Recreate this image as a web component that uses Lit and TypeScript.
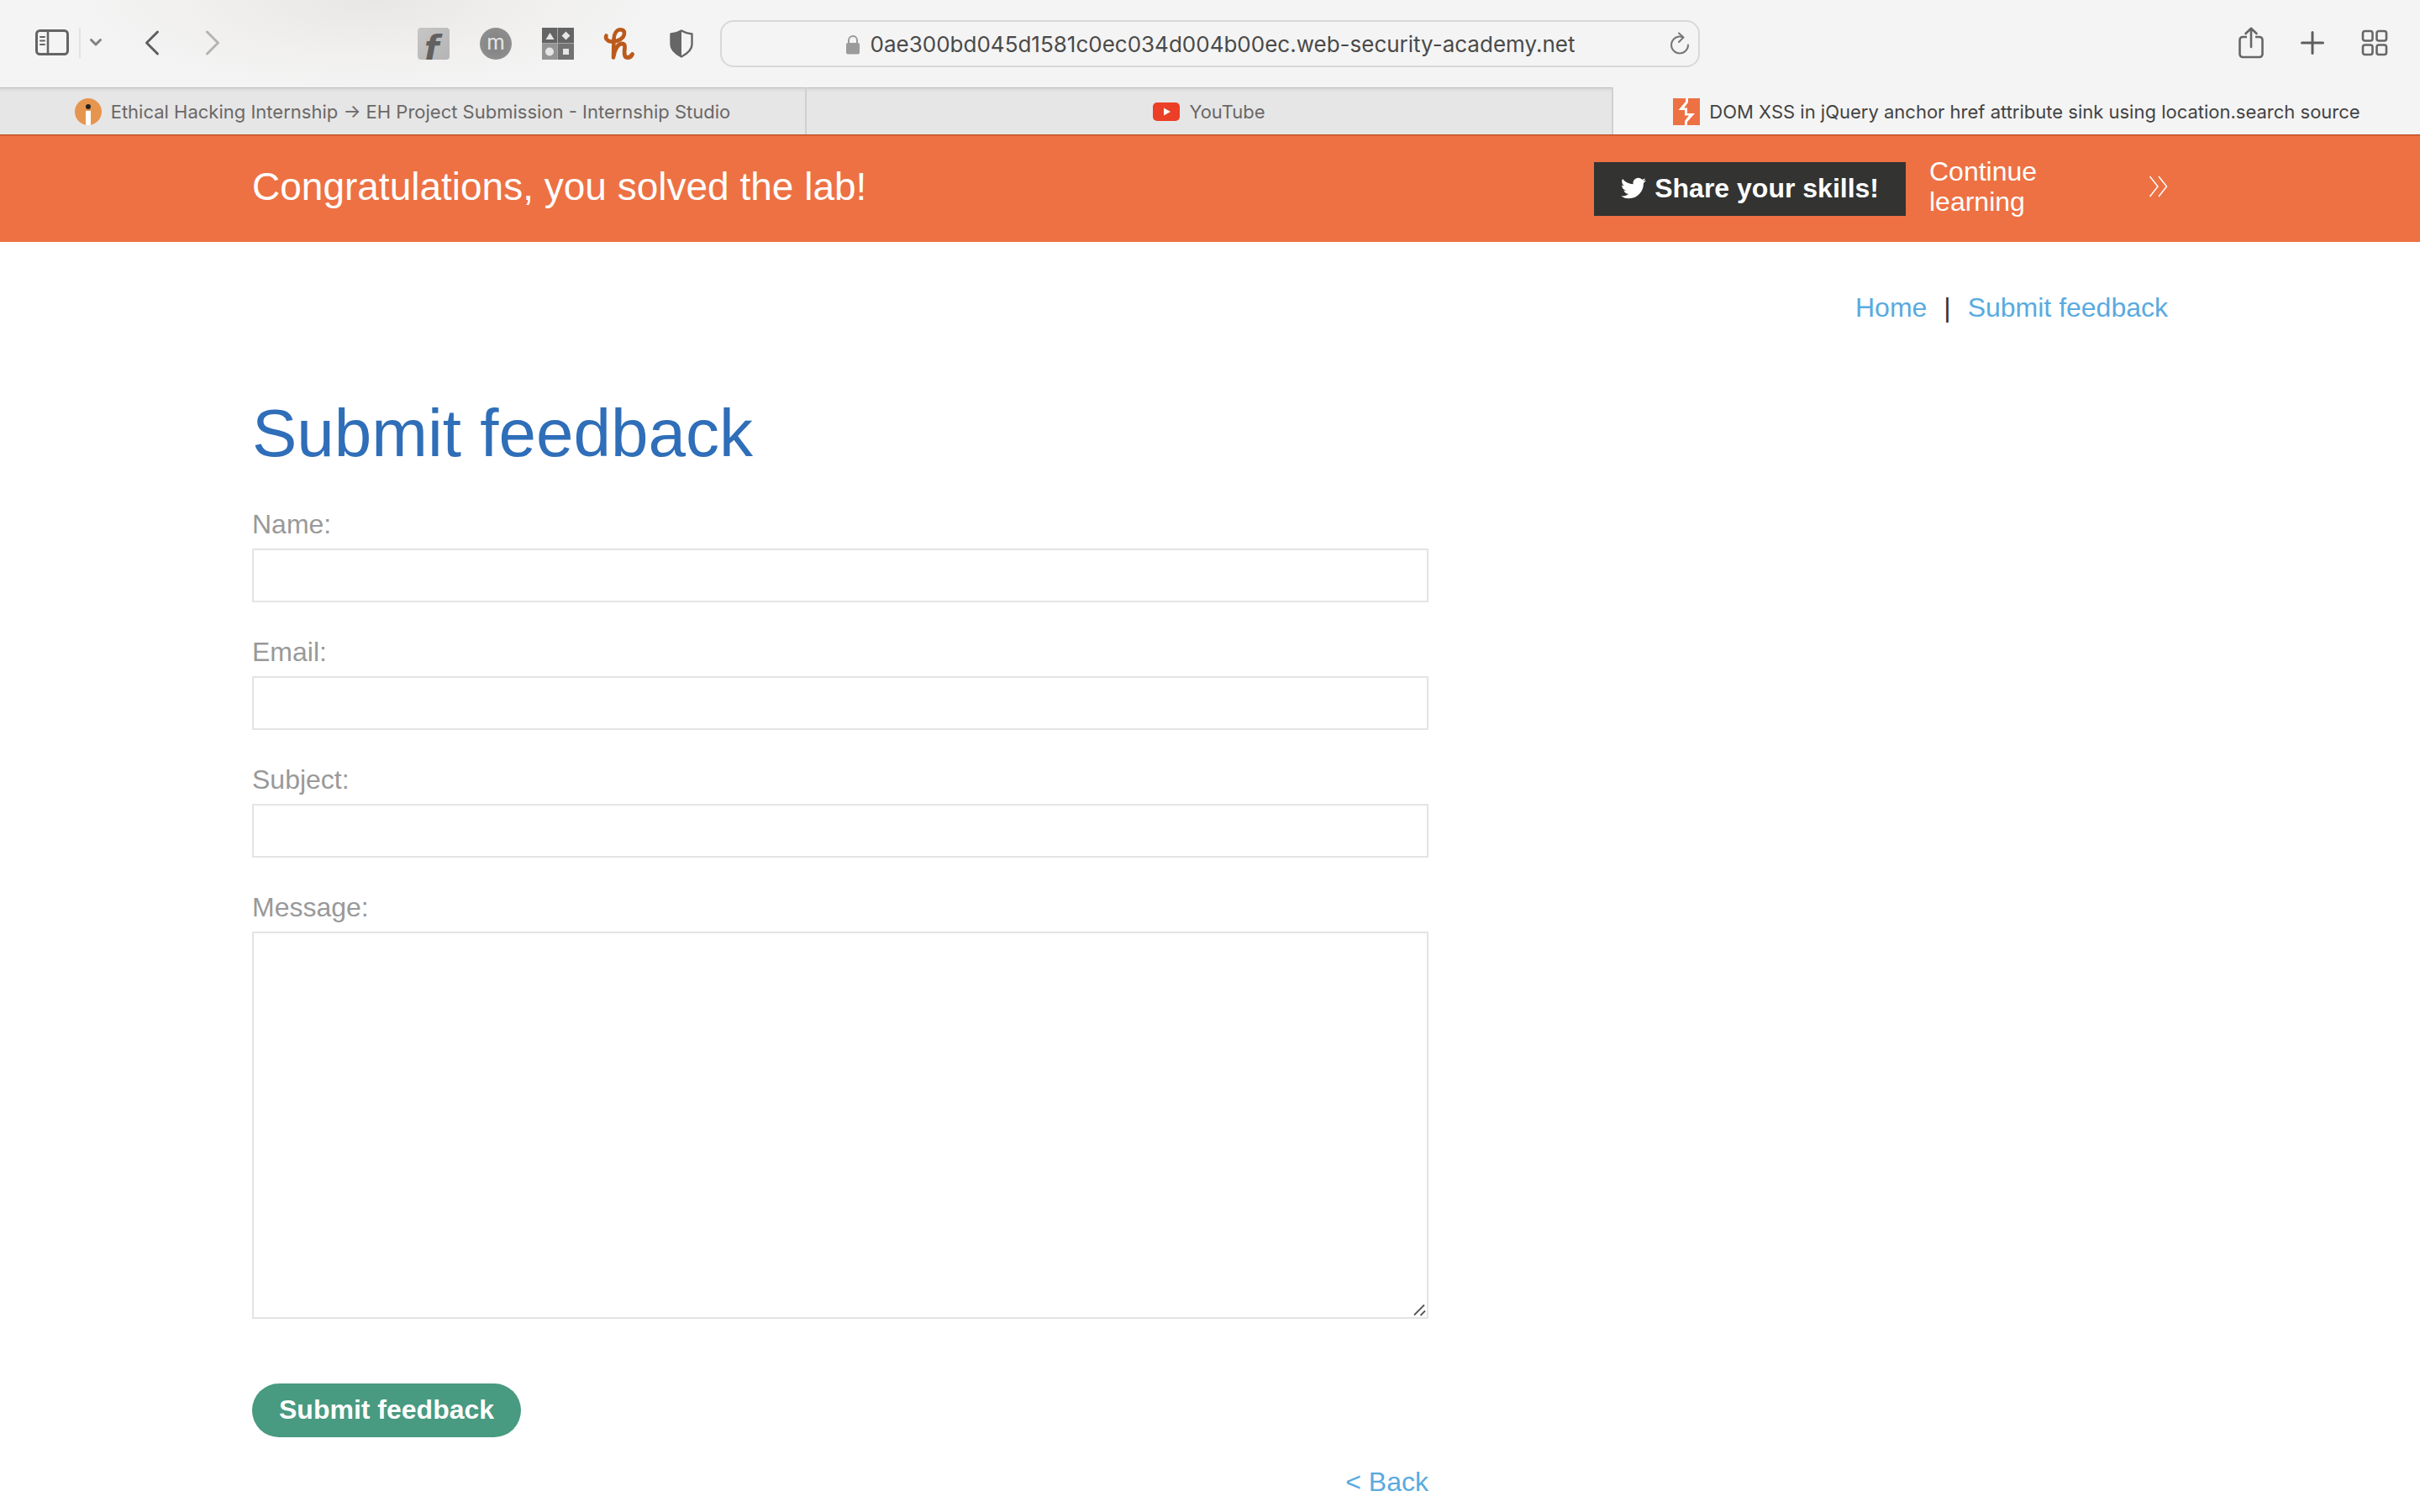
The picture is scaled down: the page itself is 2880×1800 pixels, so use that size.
import { LitElement, html, css, svg } from "lit";
import { customElement } from "lit/decorators.js";

const icon = (w: number, h: number, body: unknown) => html`<svg
  width=${w}
  height=${h}
  viewBox="0 0 ${w} ${h}"
  fill="none"
  aria-hidden="true"
>
  ${body}
</svg>`;

const icons = {
  sidebar: icon(40, 32, svg`
    <rect x="1.5" y="1.5" width="37" height="28" rx="4" stroke="#646464" stroke-width="3"/>
    <path d="M15 2v27" stroke="#646464" stroke-width="2.6"/>
    <path d="M6 9h5M6 13.5h5M6 18h5" stroke="#646464" stroke-width="2" stroke-linecap="round"/>`),
  chevronDown: icon(16, 12, svg`<path d="M2.5 2.5L8 8l5.500-5.500" stroke="#808086" stroke-width="3" stroke-linecap="round" stroke-linejoin="round"/>`),
  back: icon(18, 30, svg`<path d="M15.500 2L2.500 15l13 13" stroke="#5e5e5e" stroke-width="3" stroke-linecap="round" stroke-linejoin="round"/>`),
  forward: icon(18, 30, svg`<path d="M2.500 2l13 13-13 13" stroke="#b4b3b3" stroke-width="3" stroke-linecap="round" stroke-linejoin="round"/>`),
  fonts: icon(38, 38, svg`
    <defs>
      <linearGradient id="fg" x1="0" y1="0" x2="1" y2="1"><stop offset="0" stop-color="#c6c6c6"/><stop offset="1" stop-color="#b4b4b4"/></linearGradient>
    </defs>
    <rect width="38" height="38" rx="4" fill="url(#fg)"/>
    <text x="8" y="38" font-family="DejaVu Sans, sans-serif" font-weight="700" font-style="italic" font-size="40" fill="#626060">f</text>`),
  momentum: icon(38, 38, svg`
    <defs><radialGradient id="mg"><stop offset="0" stop-color="#808080"/><stop offset="1" stop-color="#8e8e8e"/></radialGradient></defs>
    <circle cx="19" cy="19" r="19" fill="url(#mg)"/>
    <text x="19" y="26" text-anchor="middle" font-family="Lato, sans-serif" font-size="26" fill="#e4e4e4">m</text>`),
  shapes: icon(38, 38, svg`
    <path d="M0 0h38v19H0z" fill="#646464"/>
    <path d="M0 19h19v19H0z" fill="#949494"/>
    <path d="M19 19h19v19H19z" fill="#727272"/>
    <path d="M18.500 0v38M0 18.500h38" stroke="#a8a8a8" stroke-width="1"/>
    <path d="M9.500 6l5 8h-10zM28.500 4.500l5 5-5 5-5-5zM25 25h7v7h-7z" fill="#e6e6e6"/>
    <circle cx="9" cy="28.500" r="5" fill="#e6e6e6"/>`),
  honey: icon(36, 38, svg`
    <path d="M2.500 9.500c-1.500 3 1 6.500 5.500 7 8 .5 16-4 16-10 0-3-2-4.300-4.500-4.300-5 0-7.500 5-8 11L11 35.500" stroke="#bb5a1c" stroke-width="4.600" stroke-linecap="round" stroke-linejoin="round"/>
    <path d="M11.500 33c1-7 5-14 9.500-14 3 0 4 2 3.500 5-.7 5-1 11.500 3 11.500 3 0 5-1.500 6-4" stroke="#bb5a1c" stroke-width="4.800" stroke-linecap="round" stroke-linejoin="round"/>`),
  shield: icon(28, 34, svg`
    <path d="M14 1.500C10 4 6 5 1.500 5.500V18c0 7 6 11 12.500 14.500C20.500 29 26.500 25 26.500 18V5.500C22 5 18 4 14 1.500z" stroke="#666" stroke-width="2.400" stroke-linejoin="round"/>
    <path d="M14 1.500C10 4 6 5 1.500 5.500V18c0 7 6 11 12.500 14.500z" fill="#666"/>`),
  lock: icon(18, 24, svg`
    <rect x="1" y="10" width="16" height="13.500" rx="2" fill="#9b9b9b"/>
    <path d="M4 11V7a5 5 0 0110 0v4" stroke="#9b9b9b" stroke-width="2"/>`),
  reload: icon(24, 28, svg`
    <path d="M16 6.800C14.500 5.700 13 5.500 12 5.500A10 10 0 1022 15.500" stroke="#777" stroke-width="2" stroke-linecap="round"/>
    <path d="M11 1.500l5.500 5-5.500 5.500" stroke="#777" stroke-width="2" stroke-linecap="round" stroke-linejoin="round"/>`),
  share: icon(30, 38, svg`
    <path d="M10 12H5a3.500 3.500 0 00-3.500 3.500v17A3.500 3.500 0 005 36h20a3.500 3.500 0 003.500-3.500v-17A3.500 3.500 0 0025 12h-5" stroke="#666" stroke-width="2.600"/>
    <path d="M15 24V2.500M8.500 8L15 1.800 21.500 8" stroke="#666" stroke-width="2.600" stroke-linecap="round" stroke-linejoin="round"/>`),
  plus: icon(28, 28, svg`<path d="M14 1.500v25M1.500 14h25" stroke="#5e5e5e" stroke-width="3" stroke-linecap="round"/>`),
  tiles: icon(32, 32, svg`<g stroke="#666" stroke-width="2.600">
    <rect x="2" y="2" width="11.500" height="11.500" rx="2.500"/><rect x="18.500" y="2" width="11.500" height="11.500" rx="2.500"/>
    <rect x="2" y="18.500" width="11.500" height="11.500" rx="2.500"/><rect x="18.500" y="18.500" width="11.500" height="11.500" rx="2.500"/></g>`),
  studio: icon(32, 32, svg`
    <defs><clipPath id="sc"><circle cx="16" cy="16" r="16"/></clipPath></defs>
    <g clip-path="url(#sc)"><rect width="32" height="32" fill="#e6954f"/><path d="M13 15h6v17h-6z" fill="#fff"/></g>
    <circle cx="16" cy="10" r="3" fill="#222"/>`),
  youtube: icon(32, 22, svg`<rect width="32" height="22" rx="5" fill="#eb3f27"/><path d="M13 6.500l8 4.500-8 4.500z" fill="#fff"/>`),
  burp: icon(32, 32, svg`<rect width="32" height="32" fill="#ed7143"/>
    <path d="M15 0h3v5l-5 6.500h4V18h9l-9 10v4h-3v-5l5-6.500h-5V14H6.500L15 4z" fill="#fff"/>`),
  twitter: html`<svg width="30" height="30" viewBox="0 0 24 24" fill="#fff" aria-hidden="true">
    <path d="M23.950 4.570a10 10 0 01-2.820.77 4.960 4.960 0 002.160-2.720 9.900 9.900 0 01-3.120 1.190 4.920 4.920 0 00-8.380 4.480A13.930 13.930 0 011.640 3.160a4.920 4.920 0 001.520 6.570 4.900 4.900 0 01-2.230-.61v.06a4.920 4.920 0 003.950 4.830 4.960 4.960 0 01-2.210.08 4.940 4.940 0 004.600 3.420A9.870 9.870 0 010 19.540a13.990 13.990 0 007.550 2.210c9.050 0 14-7.500 14-13.980 0-.21 0-.42-.02-.63a9.940 9.940 0 002.460-2.550z"/>
  </svg>`,
  more: icon(24, 26, svg`<path d="M2.500 1L12 13l-9.500 12M13 1l9.500 12L13 25" stroke="#fff" stroke-width="1.500"/>`),
  grip: icon(16, 16, svg`<path d="M2 14.500L14 2.500M9.500 15l5.500-5.500" stroke="#555" stroke-width="1.800"/>`),
};

@customElement("browser-toolbar")
export class BrowserToolbar extends LitElement {
  static styles = css`
    :host {
      display: grid;
      grid-template-columns: minmax(0, 1fr) minmax(0, 1166px) minmax(0, 1fr);
      align-items: center;
      height: 104px;
      font-family: Inter, sans-serif;
      background: radial-gradient(ellipse 360px 110px at 440px 0, #e8e7e5, #f1f0ef 60%, #f4f4f4);
    }
    svg { display: block; overflow: visible; }
    button {
      display: block;
      padding: 0;
      border: 0;
      background: none;
      flex: none;
    }
    .left, .nav, .extensions, .right { display: flex; align-items: center; }
    .left { justify-content: space-between; padding: 0 32px 0 42px; }
    .nav .divider { width: 2px; height: 36px; margin: 0 10px 0 12px; background: #e2e2e2; }
    .nav .back { margin: 0 54px 0 50px; }
    .nav, .right { padding-bottom: 2px; }
    .extensions { gap: 36px; }
    .extensions .shield { margin-left: 6px; }
    .right { justify-content: flex-end; gap: 44px; padding-right: 38px; }
    .address {
      display: grid;
      grid-template-columns: 24px 1fr 24px;
      align-items: center;
      box-sizing: border-box;
      height: 56px;
      padding: 0 10px;
      border: 2px solid #d8d8d8;
      border-radius: 16px;
      background: #f4f4f4;
    }
    .field {
      grid-column: 2;
      display: flex;
      align-items: center;
      justify-content: center;
      gap: 12px;
      padding-top: 2px;
    }
    .url {
      field-sizing: content;
      padding: 0;
      border: 0;
      outline: 0;
      background: none;
      font: 400 26px/32px Inter, sans-serif;
      color: #4a4a4a;
    }
  `;

  render() {
    return html`
      <div class="left">
        <div class="nav">
          <button aria-label="Show sidebar">${icons.sidebar}</button>
          <span class="divider"></span>
          <button aria-label="Tab groups">${icons.chevronDown}</button>
          <button class="back" aria-label="Back">${icons.back}</button>
          <button aria-label="Forward" disabled>${icons.forward}</button>
        </div>
        <div class="extensions">
          <button aria-label="Fonts">${icons.fonts}</button>
          <button aria-label="Momentum">${icons.momentum}</button>
          <button aria-label="Shapes">${icons.shapes}</button>
          <button aria-label="Honey">${icons.honey}</button>
          <button class="shield" aria-label="Privacy report">${icons.shield}</button>
        </div>
      </div>
      <div class="address">
        <label class="field">
          ${icons.lock}
          <input
            class="url"
            type="text"
            aria-label="Address"
            value="0ae300bd045d1581c0ec034d004b00ec.web-security-academy.net"
          />
        </label>
        <button aria-label="Reload">${icons.reload}</button>
      </div>
      <div class="right">
        <button aria-label="Share">${icons.share}</button>
        <button aria-label="New tab">${icons.plus}</button>
        <button aria-label="Tab overview">${icons.tiles}</button>
      </div>
    `;
  }
}

@customElement("browser-tabs")
export class BrowserTabs extends LitElement {
  static styles = css`
    :host {
      display: grid;
      grid-template-columns: repeat(3, minmax(0, 1fr));
      height: 56px;
    }
    .tab {
      display: flex;
      align-items: center;
      justify-content: center;
      gap: 11px;
      padding: 2px 0 0;
      border: 0;
      border-right: 2px solid #d0d0d0;
      background: linear-gradient(#bfbfbf 0 1px, #d8d8d8 1px, #e6e6e6 6px);
      font: 400 22px/28px Inter, sans-serif;
      color: #6a6868;
      white-space: nowrap;
    }
    .tab svg { display: block; flex: none; }
    .active {
      border-right: 0;
      background: #f4f4f4;
      color: #434343;
    }
  `;

  private tabs = [
    { icon: icons.studio, title: "Ethical Hacking Internship → EH Project Submission - Internship Studio" },
    { icon: icons.youtube, title: "YouTube" },
    { icon: icons.burp, title: "DOM XSS in jQuery anchor href attribute sink using location.search source", active: true },
  ];

  render() {
    return this.tabs.map(
      (t) => html`<button class="tab ${t.active ? "active" : ""}">${t.icon}<span>${t.title}</span></button>`
    );
  }
}

@customElement("lab-banner")
export class LabBanner extends LitElement {
  static styles = css`
    :host {
      display: block;
      background: #ed7143;
      box-shadow: inset 0 1px #c04a1e, inset 0 2px #dc6438;
      color: #fff;
      font-family: "Liberation Sans", Arial, sans-serif;
    }
    .inner {
      display: flex;
      align-items: center;
      box-sizing: border-box;
      max-width: 2280px;
      min-height: 128px;
      margin: 0 auto;
      padding-bottom: 4px;
    }
    .title {
      flex: 1;
      margin: 0;
      font-weight: 400;
      font-size: 46px;
      line-height: 52px;
    }
    .share {
      display: flex;
      align-items: center;
      gap: 10px;
      height: 64px;
      margin-top: 6px;
      padding: 0 32px 2px;
      border: 0;
      background: #333332;
      color: #fff;
      font: 700 32px/36px "Liberation Sans", Arial, sans-serif;
    }
    .continue {
      display: flex;
      align-items: center;
      justify-content: space-between;
      width: 284px;
      margin-left: 28px;
      color: #fff;
      font-size: 32px;
      line-height: 36px;
      text-decoration: none;
    }
    .continue span { max-width: 200px; }
    svg { display: block; flex: none; }
  `;

  render() {
    return html`
      <div class="inner">
        <h4 class="title">Congratulations, you solved the lab!</h4>
        <button class="share">${icons.twitter}<span>Share your skills!</span></button>
        <a class="continue" href="#"><span>Continue learning</span>${icons.more}</a>
      </div>
    `;
  }
}

@customElement("feedback-page")
export class FeedbackPage extends LitElement {
  static styles = css`
    :host {
      display: block;
      box-sizing: border-box;
      max-width: 2280px;
      margin: 0 auto;
      padding: 60px 0 18px;
      font: 400 32px/36px "Liberation Sans", Arial, sans-serif;
      color: #333332;
    }
    a { color: #59aae0; text-decoration: none; }
    .nav { display: flex; justify-content: flex-end; gap: 20px; }
    .heading {
      margin: 86px 0 44px;
      font-weight: 400;
      font-size: 80px;
      line-height: 92px;
      color: #2f6eb8;
    }
    .form { display: flex; flex-direction: column; max-width: 1400px; }
    label { margin-bottom: 11px; color: #999; }
    .text {
      box-sizing: border-box;
      width: 100%;
      height: 64px;
      margin: 0 0 41px;
      padding: 0 16px;
      border: 2px solid #e4e4e4;
      border-radius: 0;
      outline: 0;
      background: #fff;
      font: inherit;
      color: #333332;
    }
    .message { position: relative; margin-bottom: 77px; }
    .message .text {
      display: block;
      height: 461px;
      margin: 0;
      padding: 12px 16px;
      resize: none;
    }
    .message svg {
      position: absolute;
      right: 3px;
      bottom: 3px;
      pointer-events: none;
    }
    .submit {
      align-self: flex-start;
      height: 64px;
      padding: 0 32px 2px;
      border: 0;
      border-radius: 32px;
      background: #489a80;
      color: #fff;
      font: 700 32px/36px "Liberation Sans", Arial, sans-serif;
    }
    .back { align-self: flex-end; margin-top: 35px; }
  `;

  render() {
    return html`
      <nav class="nav"><a href="#">Home</a><span>|</span><a href="#">Submit feedback</a></nav>
      <h1 class="heading">Submit feedback</h1>
      <form class="form">
        <label for="name">Name:</label>
        <input class="text" id="name" type="text" />
        <label for="email">Email:</label>
        <input class="text" id="email" type="email" />
        <label for="subject">Subject:</label>
        <input class="text" id="subject" type="text" />
        <label for="message">Message:</label>
        <div class="message"><textarea class="text" id="message"></textarea>${icons.grip}</div>
        <button class="submit" type="button">Submit feedback</button>
        <a class="back" href="#">&lt; Back</a>
      </form>
    `;
  }
}

@customElement("app-root")
export class AppRoot extends LitElement {
  static styles = css`
    :host {
      display: block;
      min-height: 100vh;
      background: #fff;
    }
  `;

  render() {
    return html`
      <browser-toolbar></browser-toolbar>
      <browser-tabs></browser-tabs>
      <lab-banner></lab-banner>
      <feedback-page></feedback-page>
    `;
  }
}
